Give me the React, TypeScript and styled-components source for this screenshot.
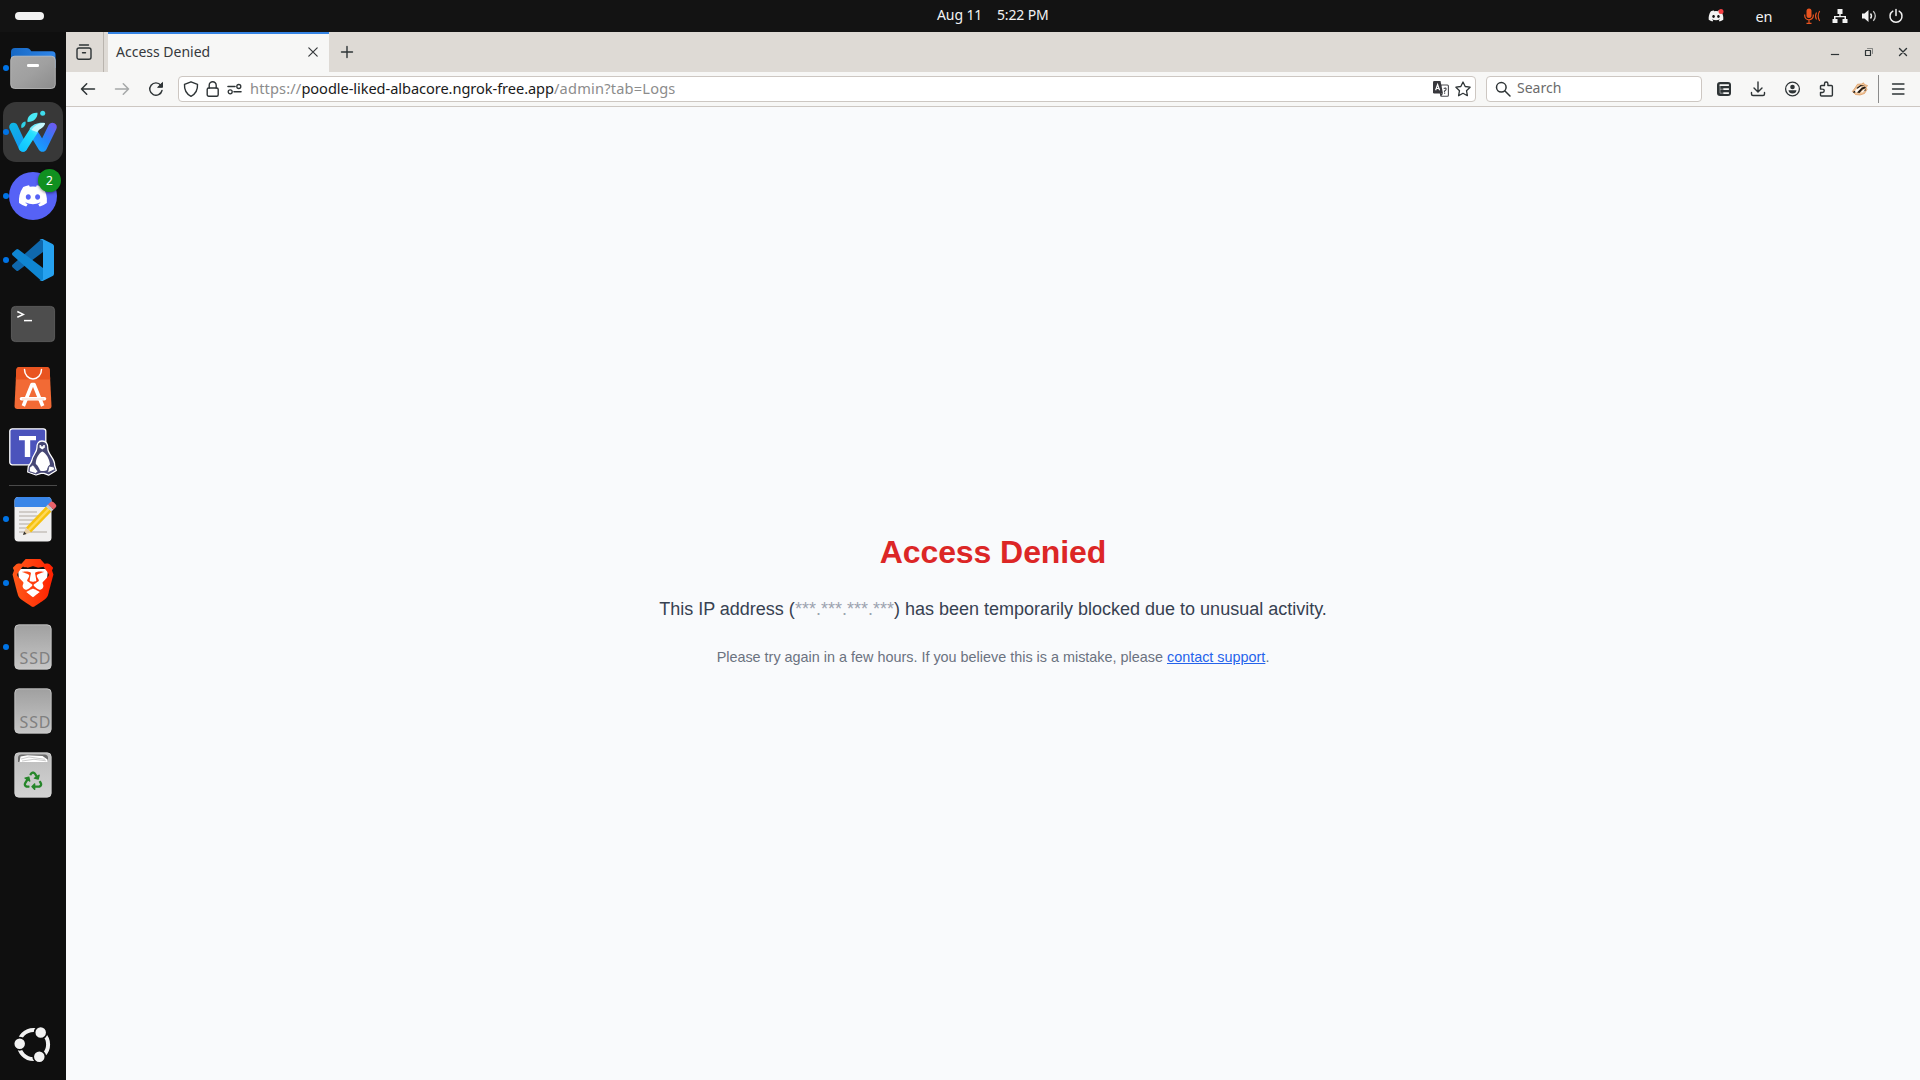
import React from "react";
import styled, { createGlobalStyle, css } from "styled-components";
import { FaDiscord, FaRecycle } from "react-icons/fa";
import { SiBrave } from "react-icons/si";

const ui = `"Noto Sans", "Open Sans", sans-serif`;

const GlobalStyle = createGlobalStyle`
  html, body { margin: 0; padding: 0; background: #0f0f0f; overflow: hidden; }
  * { box-sizing: border-box; }
  svg { display: block; flex: none; overflow: visible; }
`;

const Desktop = styled.div`
  width: 1920px;
  height: 1080px;
  display: grid;
  grid-template-rows: 32px 1fr;
  overflow: hidden;
  font-family: ${ui};
`;

/* ---------- top panel ---------- */
const TopPanel = styled.header`
  background: #131313;
  display: grid;
  grid-template-columns: 937px 1fr auto;
  align-items: center;
  padding-right: 14px;
  color: #f2f2f2;
`;
const WorkspacePill = styled.div`
  width: 29px;
  height: 8px;
  margin-left: 15px;
  border-radius: 4px;
  background: #f2f2f2;
`;
const Clock = styled.div`
  display: flex;
  gap: 15px;
  font-size: 14px;
  line-height: 20px;
  padding-bottom: 2px;
  white-space: nowrap;
`;
const ClockPart = styled.span<{ $w: number; $ls?: number }>`
  width: ${(p) => p.$w}px;
  letter-spacing: ${(p) => p.$ls ?? 0}px;
`;
const Tray = styled.div`
  display: flex;
  align-items: center;
`;
const TrayItem = styled.div<{ $w: number; $end: number }>`
  width: ${(p) => p.$w}px;
  margin-right: ${(p) => p.$end}px;
  height: 20px;
  display: flex;
  align-items: center;
  justify-content: center;
  font-size: 14.5px;
  line-height: 20px;
`;

/* ---------- workspace ---------- */
const Workspace = styled.div`
  display: grid;
  grid-template-columns: 66px 1fr;
  min-height: 0;
`;
const Dock = styled.nav`
  background: #0f0f0f;
  display: flex;
  flex-direction: column;
  padding: 4px 0;
`;
const DockItem = styled.div<{ $running?: boolean; $active?: boolean }>`
  position: relative;
  height: 64px;
  display: flex;
  align-items: center;
  justify-content: center;
  &::before {
    content: "";
    position: absolute;
    inset: 2px 3px;
    border-radius: 13px;
    background: ${(p) => (p.$active ? "#383838" : "transparent")};
  }
  ${(p) =>
    p.$running &&
    css`
      &::after {
        content: "";
        position: absolute;
        left: 3px;
        top: 29px;
        width: 6px;
        height: 6px;
        border-radius: 50%;
        background: #0073e5;
      }
    `}
  svg { position: relative; }
`;
const DockRule = styled.div`
  height: 1px;
  margin: 1px 9px;
  background: #4a4a4a;
`;
const DockSpacer = styled.div`
  flex: 1;
`;
const Badge = styled.span`
  position: absolute;
  left: 38px;
  top: 5px;
  width: 23px;
  height: 23px;
  border-radius: 50%;
  background: #109020;
  box-shadow: 0 1px 3px rgba(0, 0, 0, 0.5);
  color: #fff;
  font-size: 12px;
  line-height: 23px;
  text-align: center;
`;

/* ---------- browser ---------- */
const Browser = styled.main`
  display: grid;
  grid-template-rows: 40px 35px 1fr;
  min-width: 0;
  background: #f9fafc;
`;
const TabBar = styled.div`
  background: #dedad5;
  display: flex;
  align-items: center;
  color: #2e3436;
`;
const LibraryButton = styled.div`
  width: 38px;
  height: 40px;
  border-right: 1px solid #b9b4ae;
  display: flex;
  align-items: center;
  padding-left: 10px;
`;
const Tab = styled.div`
  margin-left: 4px;
  width: 221px;
  height: 40px;
  background: #f7f7f6;
  border-top: 2px solid #3584e4;
  display: flex;
  align-items: center;
  justify-content: space-between;
  padding: 0 11px 2px 8px;
  font-size: 14px;
  line-height: 20px;
  color: #36393c;
`;
const NewTab = styled.div`
  width: 35px;
  display: flex;
  justify-content: center;
`;
const WindowControls = styled.div`
  margin-left: auto;
  display: flex;
`;
const WindowButton = styled.div`
  width: 34px;
  display: flex;
  justify-content: center;
`;
const Toolbar = styled.div`
  background: #f7f7f6;
  border-bottom: 1px solid #cdc7c2;
  display: flex;
  align-items: center;
  color: #2e3436;
`;
const NavGroup = styled.div`
  width: 112px;
  padding-left: 5px;
  display: flex;
`;
const ToolButton = styled.div<{ $dim?: boolean; $w?: number }>`
  width: ${(p) => p.$w ?? 34}px;
  display: flex;
  justify-content: center;
  opacity: ${(p) => (p.$dim ? 0.4 : 1)};
`;
const Field = styled.div<{ $w: number }>`
  width: ${(p) => p.$w}px;
  height: 26px;
  display: flex;
  align-items: center;
  background: #fff;
  border: 1px solid #cdc7c2;
  border-radius: 4px;
  font-size: 14.6px;
  line-height: 20px;
  white-space: nowrap;
`;
const Identity = styled.div`
  width: 71px;
  padding-left: 4px;
  display: flex;
  align-items: center;
  gap: 7px;
`;
const UrlText = styled.div`
  flex: 1;
  display: flex;
  padding-bottom: 2px;
`;
const UrlPart = styled.span<{ $strong?: boolean; $ls?: number }>`
  color: ${(p) => (p.$strong ? "#1a1a1a" : "#8c8c8c")};
  letter-spacing: ${(p) => p.$ls ?? 0}px;
`;
const UrlActions = styled.div`
  display: flex;
  gap: 6px;
  padding-right: 4px;
`;
const SearchField = styled(Field)`
  margin: 0 5px 0 10px;
  padding-left: 8px;
  gap: 6px;
`;
const SearchHint = styled.span`
  padding-bottom: 2px;
  font-size: 14px;
  color: #6b6b6b;
`;
const ToolDivider = styled.div`
  width: 1px;
  height: 28px;
  margin-left: 2px;
  background: #8b8b8b;
`;

/* ---------- page ---------- */
const Page = styled.section`
  padding-top: 425px;
  text-align: center;
  font-family: "Liberation Sans", Arial, sans-serif;
`;
const Title = styled.h1`
  margin: 0 0 23px;
  font-size: 32px;
  line-height: 40px;
  font-weight: 700;
  letter-spacing: -0.08px;
  color: #dc2626;
`;
const Lead = styled.p`
  margin: 0 0 24px;
  font-size: 18px;
  line-height: 28px;
  color: #374151;
`;
const Masked = styled.span`
  color: #9ca3af;
`;
const Note = styled.p`
  margin: 0;
  font-size: 14.4px;
  line-height: 20px;
  color: #6b7280;
`;
const SupportLink = styled.a`
  color: #2563eb;
  text-decoration: underline;
`;

/* ---------- dock icons ---------- */
const FilesIcon = () => (
  <svg width="48" height="48" viewBox="0 0 48 48">
    <defs>
      <linearGradient id="fg" x1="0" y1="0" x2="1" y2="1">
        <stop offset="0" stopColor="#a9a9a9" />
        <stop offset=".5" stopColor="#a0a0a0" />
        <stop offset="1" stopColor="#8c8c8c" />
      </linearGradient>
      <linearGradient id="fb" x1="0" y1="0" x2="1" y2="0">
        <stop offset="0" stopColor="#1668c4" />
        <stop offset="1" stopColor="#2f86ea" />
      </linearGradient>
    </defs>
    <path d="M2 8a4 4 0 0 1 4-4h12q2 0 3 1.500l1.300 1.700H43a3.500 3.500 0 0 1 3.500 3.500V24H2z" fill="url(#fb)" />
    <rect x="1.700" y="12.200" width="44.600" height="32.300" rx="4" fill="url(#fg)" stroke="#c4c4c4" strokeWidth=".8" />
    <rect x="18" y="20" width="12" height="3" rx="1.300" fill="#fff" />
  </svg>
);

const WaterfoxIcon = () => (
  <svg width="48" height="48" viewBox="0 0 48 48">
    <defs>
      <linearGradient id="w1" gradientUnits="userSpaceOnUse" x1="2" y1="17" x2="16" y2="42">
        <stop offset="0" stopColor="#0fb4e6" />
        <stop offset="1" stopColor="#1394f5" />
      </linearGradient>
      <linearGradient id="w2" gradientUnits="userSpaceOnUse" x1="14" y1="42" x2="33" y2="17">
        <stop offset="0" stopColor="#10c4ff" />
        <stop offset=".6" stopColor="#26e0ff" />
        <stop offset="1" stopColor="#b8f6fb" />
      </linearGradient>
      <linearGradient id="w3" gradientUnits="userSpaceOnUse" x1="26" y1="40" x2="46" y2="18">
        <stop offset="0" stopColor="#16a4ff" />
        <stop offset=".45" stopColor="#2484fa" />
        <stop offset="1" stopColor="#6a5cf0" />
      </linearGradient>
    </defs>
    <g fill="none" strokeWidth="8.600" strokeLinecap="round" strokeLinejoin="round">
      <path d="M26 27l7.500 12.500L43.500 19" stroke="url(#w3)" />
      <path d="M4.500 19L14 39.500" stroke="url(#w1)" />
      <path d="M14 39.500L25 22.500" stroke="url(#w2)" />
    </g>
    <path d="M20.500 21c3-4.800 9-7 15.500-6-.8 5-5.500 5-8 9z" fill="#6feafa" />
    <path d="M22.500 22c3-4.800 8-7.500 13.500-7-1 5-5 5-8 9z" fill="#c9f7fb" />
    <path d="M18.500 14c-1-5 4-10 10-9.300.5 5-4 9.500-10 9.300z" fill="#4ae9f5" />
    <circle cx="33.700" cy="5.300" r="2.500" fill="#3fdcec" />
    <path d="M12.500 20c-1-3 .5-6 4-6.500.8 3-1 6-4 6.500z" fill="#2fd0e6" />
  </svg>
);

const DiscordIcon = () => (
  <svg width="48" height="48" viewBox="0 0 48 48">
    <circle cx="24" cy="24" r="24" fill="#5662f6" />
    <FaDiscord x="8.700" y="8.700" size={30.500} color="#fff" />
  </svg>
);

const CodeIcon = () => (
  <svg width="48" height="48" viewBox="0 0 48 48">
    <path d="M34 3v13L9.500 34.500q-1.200 1-2.300 0L3.500 31.200q-1-1.200 0-2.400L32 3.600z" fill="#0f68ad" />
    <path d="M34 45V32L9.500 13.500q-1.200-1-2.300 0l-3.700 3.300q-1 1.200 0 2.400L32 44.400z" fill="#0f86d2" />
    <path d="M33.700 3.100L43.600 7.900Q45 8.600 45 10.200v27.600q0 1.600-1.400 2.300l-9.900 4.800q-1.800.6-3.200-.9 3.500 1.200 3.500-1.600V5.600q0-2.800-3.500-1.600 1.400-1.500 3.200-.9z" fill="#26a2f0" />
  </svg>
);

const TerminalIcon = () => (
  <svg width="48" height="48" viewBox="0 0 48 48">
    <rect x="2.400" y="6.400" width="43.200" height="35.200" rx="4" fill="#4d4d4d" stroke="#636363" strokeWidth=".8" />
    <path d="M8.300 11.500l6 2.900-6 2.900" fill="none" stroke="#fff" strokeWidth="1.500" />
    <path d="M15 20.600h8" stroke="#fff" strokeWidth="1.500" />
  </svg>
);

const AppCenterIcon = () => (
  <svg width="48" height="48" viewBox="0 0 48 48">
    <path d="M10.500 3h27q3 0 3.200 3L42.500 42q0 3-3 3h-31q-3 0-3-3L7.300 6q.2-3 3.200-3z" fill="#f26a35" />
    <path d="M10.500 3h27q3 0 3.200 3l.5 9.500H6.800L7.300 6q.2-3 3.200-3z" fill="#e95420" />
    <path d="M15.500 5.500c0 5.500 4 9.500 8.500 9.500s8.500-4 8.500-9.500" fill="none" stroke="#fff" strokeWidth="1.500" strokeLinecap="round" />
    <path d="M14.300 42L23 20.500h2L33.700 42" fill="none" stroke="#fff" strokeWidth="3.600" strokeLinejoin="round" />
    <path d="M12.500 34.800h23" stroke="#fff" strokeWidth="3.600" strokeLinecap="round" />
    <path d="M13 35h22" stroke="#f9c4ae" strokeWidth=".7" />
  </svg>
);

const TeamsIcon = () => (
  <svg width="48" height="48" viewBox="0 0 48 48">
    <rect x=".8" y=".8" width="36" height="36" rx="2.500" fill="#4b53bc" stroke="#fff" strokeWidth="1.300" />
    <path d="M10 8h17v4.200h-5.800V29h-5.400V12.200H10z" fill="#fff" />
    <path d="M33 13c-3.800 0-5.300 3-5.100 7 .1 4-4.200 7-5.100 12.500-.4 2-1.800 3.500-3.500 6l-.6 5.500 8.300 3 5-1.600h3l4.600 1.800 7.700-4.700-1.600-5c.5-7-6.900-11-6.900-17 .2-4.500-1.600-7.500-5.800-7.500z" fill="#464775" stroke="#fff" strokeWidth="1.300" strokeLinejoin="round" />
    <path d="M33.200 23.500c-3 1.500-6.700 7-6.400 12.500 2 1.500 3.400 4 4.200 6.500 2 1 5.500.6 7-.6.6-2.500 1-4 3-5.500-.6-5.500-3.600-11-7.800-12.900z" fill="#fff" />
    <path d="M20.500 39.500l3.500-2.700 5 6.700-2.300 2-6.500-2zM38.500 45l1.500-7 5 1 .8 2.500z" fill="#fff" stroke="#464775" strokeWidth=".8" />
    <path d="M30.200 19.200q3-1.800 6 0l-3 2.300z" fill="#fff" />
    <circle cx="31.300" cy="18" r="1" fill="#fff" />
    <circle cx="35" cy="18" r="1.100" fill="#fff" />
  </svg>
);

const EditorIcon = () => (
  <svg width="48" height="48" viewBox="0 0 48 48">
    <rect x="5.500" y="2" width="37" height="44.500" rx="4" fill="#f0efef" />
    <path d="M5.500 12V6a4 4 0 0 1 4-4h29a4 4 0 0 1 4 4v6z" fill="#3a86e8" />
    <path d="M10 17h18M10 21h19M10 25h15M10 29h12M10 33h9M10 37h28" stroke="#c5c1bc" strokeWidth="1.600" />
    <path d="M17 32.500L37 11.500l5.500 5L22 37.500z" fill="#f5c211" />
    <path d="M18.800 34.200L39 13.300l1.700 1.500L20.300 36z" fill="#ffd95a" />
    <path d="M17 32.500l5 5-8 2.500z" fill="#e8cfa5" />
    <path d="M15.200 36.500l2.300 2.500-3.500 1z" fill="#333" />
    <path d="M37 11.500l2-2 5.500 5-2 2z" fill="#c9c9cb" />
    <path d="M39 9.500l2.200-2.200q1.700-1.500 3.400 0l2 2q1.700 1.700 0 3.300l-2.100 1.900z" fill="#e9626b" />
  </svg>
);

const BraveIcon = () => (
  <svg width="48" height="48" viewBox="0 0 48 48">
    <defs>
      <linearGradient id="br" x1="0" y1="0" x2="1" y2="0">
        <stop offset="0" stopColor="#ff5a1a" />
        <stop offset="1" stopColor="#ff2000" />
      </linearGradient>
    </defs>
    <path d="M9 10h30l-2 22-13 9-13-9z" fill="#fff" />
    <SiBrave x="0" y="0" size={48} style={{ fill: "url(#br)" }} />
  </svg>
);

const DriveIcon = ({ id }: { id: string }) => (
  <svg width="48" height="48" viewBox="0 0 48 48">
    <defs>
      <linearGradient id={id} x1="0" y1="0" x2="0" y2="1">
        <stop offset="0" stopColor="#a0a0a0" />
        <stop offset="1" stopColor="#c6c6c6" />
      </linearGradient>
    </defs>
    <rect x="5.800" y="1.800" width="36.400" height="44.400" rx="4" fill={`url(#${id})`} stroke="#cfcfcf" strokeWidth=".8" />
    <text x="10.500" y="41" fontSize="16" textLength="31" fontFamily="Noto Sans, sans-serif" fill="#808080">SSD</text>
  </svg>
);

const TrashIcon = () => (
  <svg width="48" height="48" viewBox="0 0 48 48">
    <defs>
      <linearGradient id="tr" x1="0" y1="0" x2="0" y2="1">
        <stop offset="0" stopColor="#bdbdbd" />
        <stop offset="1" stopColor="#d2d2d2" />
      </linearGradient>
    </defs>
    <rect x="5.800" y="1.800" width="36.400" height="44.400" rx="4" fill="url(#tr)" stroke="#d8d8d8" strokeWidth=".8" />
    <path d="M9 11V7q0-3.500 3.500-3.500h23Q39 3.500 39 7v4z" fill="#6b6b6b" />
    <path d="M10.500 11l1-5.500 7-1.200 15 .8 5 3.400.3 2.500z" fill="#fff" />
    <path d="M12 8l8-2 16 2.300M13 10l12-1.700 12 1.500" stroke="#b5b5b5" strokeWidth=".7" fill="none" />
    <FaRecycle x="14.700" y="20.500" size={18.600} color="#26862a" />
  </svg>
);

const UbuntuIcon = () => (
  <svg width="48" height="48" viewBox="0 0 48 48">
    <circle cx="24.500" cy="24.500" r="14.600" fill="none" stroke="#f2f2f2" strokeWidth="4" />
    <g fill="#f2f2f2" stroke="#0f0f0f" strokeWidth="1.700">
      <circle cx="31.700" cy="12.500" r="6.100" />
      <circle cx="10.700" cy="23.700" r="6.100" />
      <circle cx="30.300" cy="36.700" r="6.100" />
    </g>
  </svg>
);

/* ---------- small glyphs ---------- */
const Glyph = ({ w = 16, h = 16, sw = 1.3, children }: { w?: number; h?: number; sw?: number; children: React.ReactNode }) => (
  <svg width={w} height={h} viewBox={`0 0 ${w} ${h}`} fill="none" stroke="currentColor" strokeWidth={sw} strokeLinecap="round" strokeLinejoin="round">
    {children}
  </svg>
);

const TrayIcons = () => (
  <Tray>
    <TrayItem $w={16} $end={32}>
      <svg width="16" height="16" viewBox="0 0 16 16">
        <FaDiscord x="0" y="0" size={16} color="#f2f2f2" />
        <circle cx="13" cy="3.500" r="2.500" fill="#f23f43" />
      </svg>
    </TrayItem>
    <TrayItem $w={16} $end={32}>en</TrayItem>
    <TrayItem $w={16} $end={12}>
      <svg width="16" height="16" viewBox="0 0 16 16" fill="none" stroke="#e95420">
        <rect x="2.500" y="0.500" width="5" height="9.500" rx="2.500" fill="#e95420" stroke="none" />
        <path d="M.7 6.500v1a4.300 4.300 0 0 0 8.600 0v-1M5 12v3M2.500 15.400h5" strokeWidth="1.200" />
        <path d="M12.500 4.500q-2 3.500 0 7M15.700 3q-3 5 0 10" strokeWidth="1.100" />
      </svg>
    </TrayItem>
    <TrayItem $w={16} $end={13}>
      <svg width="16" height="16" viewBox="0 0 16 16" fill="#f2f2f2">
        <path d="M5.500 1h5v5H8.700v2H14v3h1.500v4h-5v-4h2V9.300h-9V11h2v4h-5v-4H2V8h5.300V6H5.500z" />
      </svg>
    </TrayItem>
    <TrayItem $w={16} $end={11}>
      <svg width="16" height="16" viewBox="0 0 16 16" fill="none" stroke="#f2f2f2">
        <path d="M1 5.500h2.500L7.500 2v12l-4-3.500H1z" fill="#f2f2f2" stroke="none" />
        <path d="M9.500 5.500q2 2.500 0 5" strokeWidth="1.400" />
        <path d="M12.300 3.200q4 4.800 0 9.600" strokeWidth="1.300" opacity=".8" />
      </svg>
    </TrayItem>
    <TrayItem $w={16} $end={2}>
      <Glyph sw={1.500}>
        <path d="M8 1.500v6M4.800 3.200a6 6 0 1 0 6.400 0" />
      </Glyph>
    </TrayItem>
  </Tray>
);

const ContainersGlyph = () => (
  <svg width="16" height="16" viewBox="0 0 16 16">
    <rect x="1" y="1" width="14" height="14" rx="3" fill="#2e3436" />
    <path d="M3.600 4.200h9.300M7.300 8.200h5.600M7.300 12.200h5.600" stroke="#f7f7f6" strokeWidth="1.700" />
    <path d="M4 4.200v8h3.300M4 8.200h3.300" stroke="#f7f7f6" strokeWidth=".7" opacity=".7" fill="none" />
  </svg>
);

const BadgerGlyph = () => (
  <svg width="16" height="16" viewBox="0 0 16 16">
    <path d="M.3 10.500L3 7l2.500-3.800L9.500 3l2-1.200 1 1.700 3 1-1.300 2 .8 2-2.500 4-4.500 1.500-4.500-.5L2 12z" fill="#efc59b" stroke="#d98a45" strokeWidth=".6" />
    <path d="M2.500 10.500L7.500 5l2.500.5-5 6z" fill="#fff" />
    <path d="M5 11.500l5-5 3-1 1 1.500-3.500 1.500-3 3.500z" fill="#1f1a16" />
    <path d="M4.500 7l4-3 4.500.7-4 .6-3.500 2.500zM.8 11l2-1.300.7 1.600-1.500.6zM10.500 10.500l3.300-2.500-.3 1.800z" fill="#1f1a16" />
    <path d="M8.500 11.500l3.500-3 1 .3-2 2.500z" fill="#fff" />
  </svg>
);

const TranslateGlyph = () => (
  <svg width="16" height="16" viewBox="0 0 16 16">
    <rect x="7.600" y="4" width="7.800" height="11.300" rx="1" fill="#fff" stroke="#4a4a4f" strokeWidth="1.100" />
    <path d="M1.200 0h6.300l2.500 12.500H1.200Q0 12.500 0 11.300V1.200Q0 0 1.200 0z" fill="#38383d" />
    <path d="M6.500 12.500H10l-1.500 2.500z" fill="#38383d" />
    <path d="M2.600 9.200L4.600 3.500l2 5.700M3.300 7.500h2.600" stroke="#fff" strokeWidth="1.200" fill="none" />
    <path d="M10.700 7.500q2.800-1.200 2.300 1-.3 1-1.500 1.500v1M11 12.200h1.200" stroke="#4a4a4f" strokeWidth="1.200" fill="none" />
  </svg>
);

export default function App() {
  return (
    <Desktop>
      <GlobalStyle />
      <TopPanel>
        <WorkspacePill />
        <Clock>
          <ClockPart $w={45} $ls={-0.1}>Aug 11</ClockPart>
          <ClockPart $w={52} $ls={-0.15}>5:22 PM</ClockPart>
        </Clock>
        <TrayIcons />
      </TopPanel>
      <Workspace>
        <Dock>
          <DockItem $running><FilesIcon /></DockItem>
          <DockItem $running $active><WaterfoxIcon /></DockItem>
          <DockItem $running>
            <DiscordIcon />
            <Badge>2</Badge>
          </DockItem>
          <DockItem $running><CodeIcon /></DockItem>
          <DockItem><TerminalIcon /></DockItem>
          <DockItem><AppCenterIcon /></DockItem>
          <DockItem><TeamsIcon /></DockItem>
          <DockRule />
          <DockItem $running><EditorIcon /></DockItem>
          <DockItem $running><BraveIcon /></DockItem>
          <DockItem $running><DriveIcon id="d1" /></DockItem>
          <DockItem><DriveIcon id="d2" /></DockItem>
          <DockItem><TrashIcon /></DockItem>
          <DockSpacer />
          <DockItem><UbuntuIcon /></DockItem>
        </Dock>
        <Browser>
          <TabBar>
            <LibraryButton>
              <Glyph sw={1.400}>
                <path d="M3.500 1h9" />
                <rect x="1" y="4" width="14" height="11.300" rx="2" />
                <path d="M6.500 8.700h3" />
              </Glyph>
            </LibraryButton>
            <Tab>
              <span>Access Denied</span>
              <Glyph w={10} h={10} sw={1.200}><path d="M.8.800l8.400 8.400M9.200.800L.8 9.200" /></Glyph>
            </Tab>
            <NewTab>
              <Glyph w={12} h={12} sw={1.400}><path d="M6 .5v11M.5 6h11" /></Glyph>
            </NewTab>
            <WindowControls>
              <WindowButton><Glyph w={10} h={10} sw={1.200}><path d="M1.500 7.500h7" strokeLinecap="square" /></Glyph></WindowButton>
              <WindowButton>
                <Glyph w={10} h={10} sw={1.200}>
                  <path d="M1.500 3.500h5v5h-5z" />
                  <path d="M3.500 1.500h5v5" opacity=".5" strokeWidth="1" />
                </Glyph>
              </WindowButton>
              <WindowButton><Glyph w={10} h={10} sw={1.400}><path d="M1.500 1.500l7 7M8.500 1.500l-7 7" /></Glyph></WindowButton>
            </WindowControls>
          </TabBar>
          <Toolbar>
            <NavGroup>
              <ToolButton><Glyph sw={1.500}><path d="M14.500 8h-13M6.700 2.800L1.500 8l5.200 5.200" /></Glyph></ToolButton>
              <ToolButton $dim><Glyph sw={1.500}><path d="M1.500 8h13M9.300 2.800L14.500 8l-5.200 5.200" /></Glyph></ToolButton>
              <ToolButton>
                <Glyph sw={1.400}>
                  <path d="M14 9.500A6.200 6.200 0 1 1 12.800 4.200" />
                  <path d="M14.500 1.800v4.500H10z" fill="currentColor" strokeWidth="1" />
                </Glyph>
              </ToolButton>
            </NavGroup>
            <Field $w={1298}>
              <Identity>
                <Glyph sw={1.400}><path d="M8 .8l6.500 2.500c.3 5-1.500 9.500-6.500 12-5-2.500-6.800-7-6.500-12z" /></Glyph>
                <Glyph w={14} sw={1.400}><rect x="1.200" y="7" width="11" height="8.300" rx="1.500" /><path d="M3.200 7V4.300a3.500 3.500 0 0 1 7 0V7" /></Glyph>
                <Glyph sw={1.300}>
                  <path d="M1 5.500h7M7 10.800h7" strokeWidth="1.600" />
                  <circle cx="11.800" cy="5.500" r="2" />
                  <circle cx="3.200" cy="10.800" r="2" />
                </Glyph>
              </Identity>
              <UrlText>
                <UrlPart $ls={0.14}>https://</UrlPart>
                <UrlPart $strong $ls={-0.06}>poodle-liked-albacore.ngrok-free.app</UrlPart>
                <UrlPart $ls={0.2}>/admin?tab=Logs</UrlPart>
              </UrlText>
              <UrlActions>
                <TranslateGlyph />
                <Glyph sw={1.300}><path d="M8 1l2.200 4.500 4.900.7-3.600 3.500.9 5L8 12.300l-4.400 2.400.9-5L.9 6.200l4.900-.7z" /></Glyph>
              </UrlActions>
            </Field>
            <SearchField $w={216}>
              <Glyph sw={1.500}><circle cx="6.300" cy="6.300" r="4.800" /><path d="M10 10l5 5" /></Glyph>
              <SearchHint>Search</SearchHint>
            </SearchField>
            <ToolButton><ContainersGlyph /></ToolButton>
            <ToolButton><Glyph sw={1.400}><path d="M8 1v9.500M4 7l4 4 4-4M1.500 11.500v1.500q0 1.500 1.500 1.500h10q1.500 0 1.500-1.500v-1.500" /></Glyph></ToolButton>
            <ToolButton>
              <Glyph sw={1.300}>
                <circle cx="8.500" cy="8" r="6.900" />
                <circle cx="8.500" cy="6" r="2.300" fill="currentColor" stroke="none" />
                <path d="M4.500 9.300h8q-.5 3.200-4 3.200t-4-3.200z" fill="currentColor" stroke="none" />
              </Glyph>
            </ToolButton>
            <ToolButton>
              <Glyph sw={1.400}><path d="M2.500 8V5.500q0-1 1-1h3V2.700a1.700 1.700 0 0 1 3.400 0v1.800h3.500q1 0 1 1V14q0 1-1 1H3.500q-1 0-1-1v-2.500h2a1.700 1.700 0 0 0 0-3.400z" /></Glyph>
            </ToolButton>
            <ToolButton $w={33}><BadgerGlyph /></ToolButton>
            <ToolDivider />
            <ToolButton $w={38}><Glyph w={14} h={14} sw={1.300}><path d="M1.500 2h11.500M1.500 7h11.500M1.500 12h11.500" /></Glyph></ToolButton>
          </Toolbar>
          <Page>
            <Title>Access Denied</Title>
            <Lead>
              This IP address (<Masked>***.***.***.***</Masked>) has been temporarily blocked due to unusual activity.
            </Lead>
            <Note>
              Please try again in a few hours. If you believe this is a mistake, please <SupportLink>contact support</SupportLink>.
            </Note>
          </Page>
        </Browser>
      </Workspace>
    </Desktop>
  );
}
